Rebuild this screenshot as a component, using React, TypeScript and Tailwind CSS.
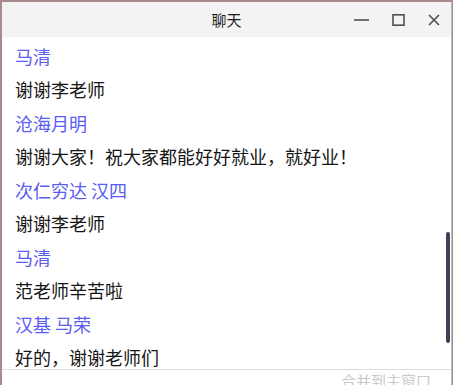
type Message = {
  name: string;
  text: string;
};

const messages: Message[] = [
  { name: '马清', text: '谢谢李老师' },
  { name: '沧海月明', text: '谢谢大家！祝大家都能好好就业，就好业！' },
  { name: '次仁穷达 汉四', text: '谢谢李老师' },
  { name: '马清', text: '范老师辛苦啦' },
  { name: '汉基 马荣', text: '好的，谢谢老师们' },
];

const App = () => {
  return (
    <div
      className="w-[453px] h-[385px] overflow-hidden bg-[#a88a8c] pt-[2px] pl-[2px]"
      style={{ fontFamily: '"Noto Sans CJK SC", "Noto Sans", sans-serif' }}
    >
      <div className="w-[450px] h-[383px] flex flex-col bg-white border-r border-[#bdbdbd]">
        {/* title bar */}
        <div className="h-[35px] shrink-0 grid grid-cols-[1fr_auto_1fr] items-center bg-[#f3f3f3]">
          <div />
          <div className="text-[15px] text-[#1b1b1b] leading-none">聊天</div>
          <div className="flex justify-end items-center text-[#505050] pr-[11px] gap-[23px]">
            <svg width="15" height="12" viewBox="0 0 15 12">
              <line x1="0" y1="6" x2="15" y2="6" stroke="currentColor" strokeWidth="1.6" />
            </svg>
            <svg width="13" height="12" viewBox="0 0 13 12">
              <rect x="1" y="0.8" width="11" height="10.4" fill="none" stroke="currentColor" strokeWidth="1.6" />
            </svg>
            <svg width="12" height="12" viewBox="0 0 12 12">
              <path d="M1 1L11 11M11 1L1 11" stroke="currentColor" strokeWidth="1.6" />
            </svg>
          </div>
        </div>

        {/* messages */}
        <div className="relative flex-1 overflow-hidden pl-[13px] pt-[3px]">
          {messages.map((m, i) => (
            <div key={i} className="flex flex-col">
              <div className="h-[32px] flex items-center text-[18px] text-[#5a5cf3]">
                {m.name}
              </div>
              <div className="h-[35px] flex items-center text-[18px] text-[#161616]">
                {m.text}
              </div>
            </div>
          ))}
          <div className="absolute right-[1px] top-[195px] w-[4px] h-[111px] rounded-full bg-[#3d4154]" />
        </div>

        {/* footer */}
        <div className="h-[16px] shrink-0 border-t border-[#dcdcdc] flex justify-end pr-[20px] pt-[1px]">
          <span className="text-[15px] leading-[20px] text-[#c9c9c9]">合并到主窗口</span>
        </div>
      </div>
    </div>
  );
};

export default App;
